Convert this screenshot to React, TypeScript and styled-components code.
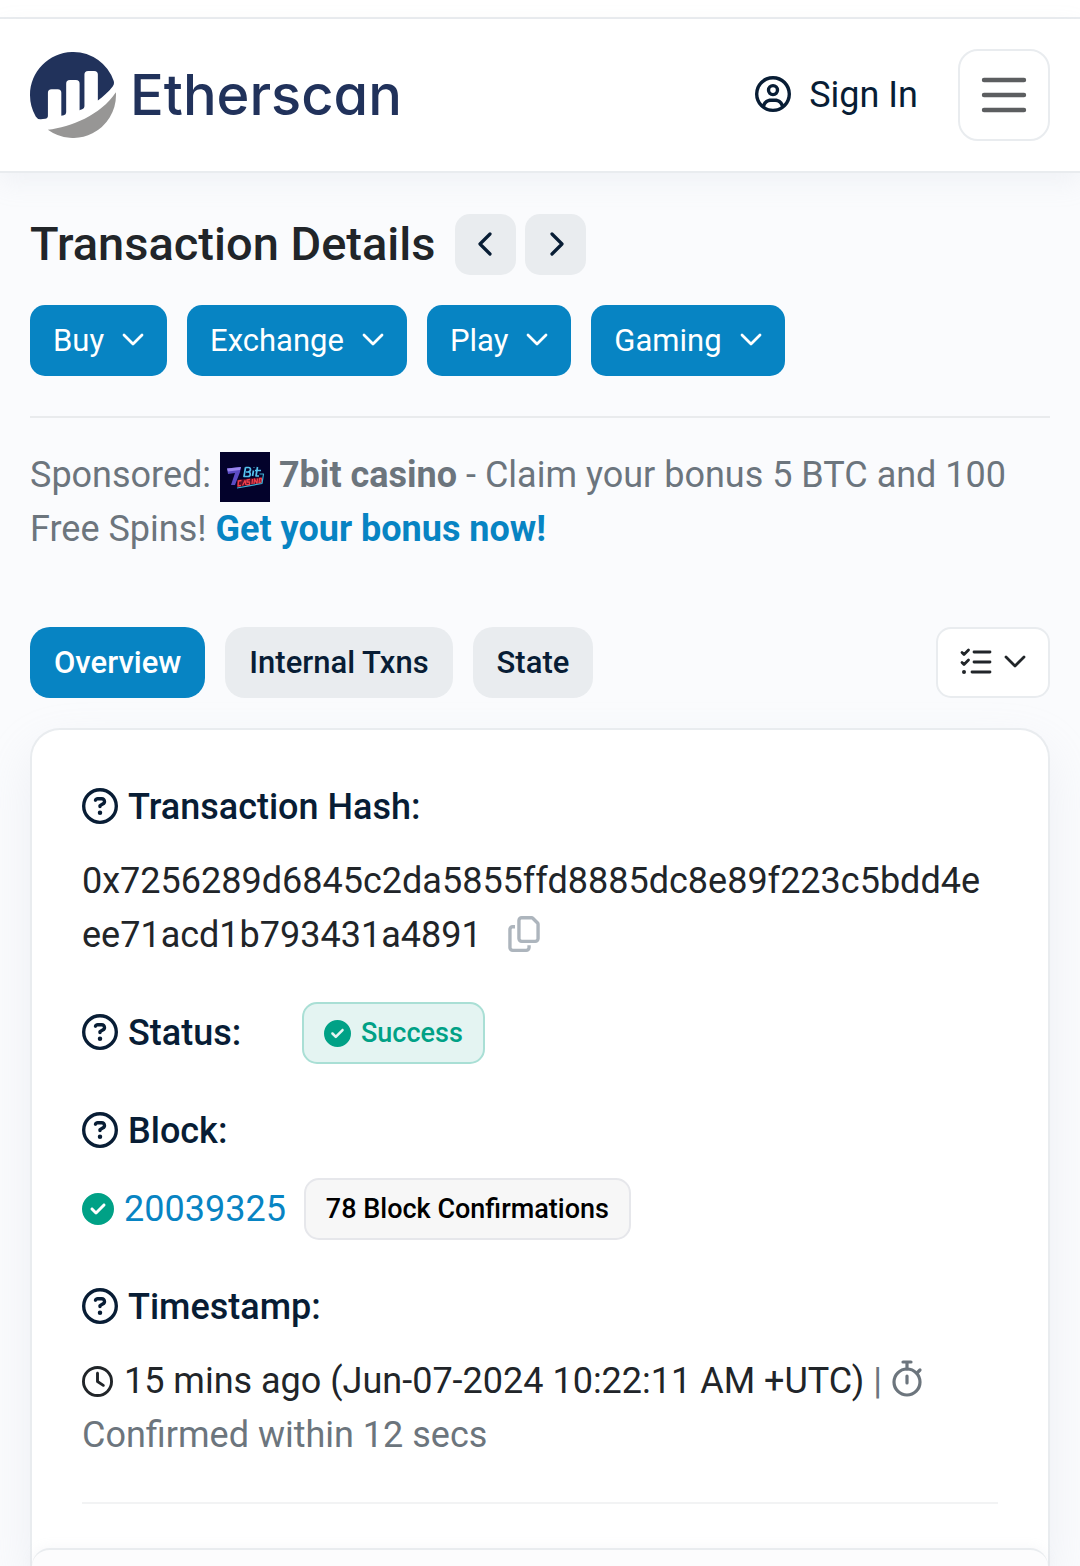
import React from "react";
import styled, { createGlobalStyle } from "styled-components";
import {
  FaCircleCheck,
  FaRegCircleQuestion,
  FaRegCircleUser,
  FaRegClock,
  FaRegCopy,
} from "react-icons/fa6";

const color = {
  navy: "#081d35",
  brand: "#21325b",
  blue: "#0784c3",
  text: "#212529",
  muted: "#6c757d",
  line: "#e9ecef",
  green: "#00a186",
  page: "#fafbfd",
};

const GlobalStyle = createGlobalStyle`
  *, *::before, *::after { box-sizing: border-box; }
  body {
    margin: 0;
    background: ${color.page};
    color: ${color.text};
    font-family: Roboto, "Liberation Sans", sans-serif;
    font-size: 36px;
    line-height: 54px;
  }
  button { font: inherit; color: inherit; margin: 0; cursor: pointer; }
  a { text-decoration: none; color: ${color.blue}; }
  svg { flex: none; }
`;

const Page = styled.div`
  display: flex;
  flex-direction: column;
  min-height: 100vh;
`;

const TopStrip = styled.div`
  height: 19px;
  background: #fff;
  border-bottom: 2px solid ${color.line};
`;

const Header = styled.header`
  display: flex;
  align-items: center;
  justify-content: space-between;
  padding: 30px;
  background: #fff;
  border-bottom: 2px solid ${color.line};
  box-shadow: 0 10px 24px rgba(189, 197, 209, 0.15);
`;

const Brand = styled.a`
  display: flex;
  align-items: center;
  gap: 14px;
  color: ${color.brand};
  font-family: Inter, Roboto, sans-serif;
  font-size: 56px;
  font-weight: 500;
  font-feature-settings: "cv11" 1;
`;

const HeaderActions = styled.div`
  display: flex;
  align-items: center;
  gap: 40px;
`;

const SignIn = styled.a`
  display: flex;
  align-items: center;
  gap: 18px;
  color: ${color.navy};

  svg {
    margin-bottom: 3px;
  }
`;

const MenuButton = styled.button`
  display: flex;
  align-items: center;
  justify-content: center;
  width: 92px;
  height: 92px;
  padding: 0;
  background: #fff;
  border: 2px solid ${color.line};
  border-radius: 20px;
`;

const Main = styled.main`
  display: flex;
  flex-direction: column;
  flex: 1;
  padding: 40px 30px 0;
`;

const TitleRow = styled.div`
  display: flex;
  align-items: center;
  gap: 20px;
  margin-bottom: 30px;
`;

const Title = styled.h1`
  margin: 0;
  font-size: 47px;
  line-height: 62px;
  font-weight: 500;
`;

const Pager = styled.div`
  display: flex;
  gap: 9px;
`;

const PagerButton = styled.button`
  display: flex;
  align-items: center;
  justify-content: center;
  width: 61px;
  height: 61px;
  padding: 0;
  border: 0;
  border-radius: 15px;
  background: ${color.line};
  color: ${color.navy};
`;

const PromoRow = styled.div`
  display: flex;
  flex-wrap: wrap;
  gap: 20px;
`;

const PromoButton = styled.button`
  display: flex;
  align-items: center;
  gap: 18px;
  height: 71px;
  padding: 0 23px;
  border: 0;
  border-radius: 15px;
  background: ${color.blue};
  color: #fff;
  font-size: 31px;
`;

const Rule = styled.hr<{ $gap: number; $soft?: boolean }>`
  width: 100%;
  height: 2px;
  margin: 40px 0 ${(p) => p.$gap}px;
  border: 0;
  background: ${(p) => (p.$soft ? "#f2f3f4" : "#e9ebed")};
`;

const Sponsored = styled.p`
  margin: 0 0 71px;
  color: ${color.muted};

  svg {
    vertical-align: -15px;
  }
  a {
    font-weight: 700;
  }
`;

const Toolbar = styled.div`
  display: flex;
  justify-content: space-between;
  margin-bottom: 30px;
`;

const Tabs = styled.div`
  display: flex;
  gap: 20px;
`;

const Tab = styled.button<{ $active?: boolean }>`
  height: 71px;
  padding: 0 24px;
  border: 0;
  border-radius: 20px;
  background: ${(p) => (p.$active ? color.blue : color.line)};
  color: ${(p) => (p.$active ? "#fff" : color.navy)};
  font-size: 31px;
  font-weight: 500;
`;

const ViewButton = styled.button`
  display: flex;
  align-items: center;
  gap: 12px;
  height: 71px;
  padding: 0 22px;
  border: 2px solid ${color.line};
  border-radius: 15px;
  background: #fff;
`;

const Card = styled.section`
  display: flex;
  flex-direction: column;
  flex: 1;
  background: #fff;
  border: 2px solid ${color.line};
  border-bottom: 0;
  border-radius: 30px 30px 0 0;
  box-shadow: 0 20px 48px rgba(189, 197, 209, 0.2);
`;

const Details = styled.dl`
  display: flex;
  flex-direction: column;
  gap: 40px;
  margin: 0;
  padding: 50px 50px 0;
`;

const Field = styled.div<{ $inline?: boolean }>`
  display: flex;
  flex-direction: ${(p) => (p.$inline ? "row" : "column")};
  align-items: ${(p) => (p.$inline ? "center" : "stretch")};
  gap: ${(p) => (p.$inline ? 0 : 20)}px;
`;

const Label = styled.dt`
  display: flex;
  align-items: center;
  gap: 10px;
  min-width: 220px;
  color: ${color.navy};
  font-weight: 500;

  svg {
    margin-bottom: 3px;
  }
`;

const Value = styled.dd`
  margin: 0;
  overflow-wrap: anywhere;
`;

const BlockValue = styled(Value)`
  display: flex;
  align-items: center;

  a {
    margin: 0 18px 0 10px;
  }
`;

const CopyButton = styled.button`
  display: inline-block;
  margin-left: 24px;
  padding: 0;
  border: 0;
  background: none;
  color: #adb5bd;
  vertical-align: -5px;

  svg {
    display: block;
  }
`;

const Badge = styled.span<{ $tone: "success" | "neutral" }>`
  display: flex;
  align-items: center;
  gap: 10px;
  height: 62px;
  padding: 0 20px;
  border: 2px solid ${(p) => (p.$tone === "success" ? "#a9dfd5" : "#e6e7eb")};
  border-radius: 15px;
  background: ${(p) => (p.$tone === "success" ? "#e4f4f2" : "#f7f7f7")};
  color: ${(p) => (p.$tone === "success" ? color.green : "#000")};
  font-size: 27px;
  line-height: 40px;
  font-weight: 500;
`;

const Muted = styled.span`
  color: ${color.muted};

  svg {
    vertical-align: -4px;
  }
`;

const Time = styled.span`
  svg {
    vertical-align: -4px;
    margin-right: 2px;
  }
`;

const RuleWrap = styled.div`
  padding: 0 50px;
`;

const NextPanel = styled.div`
  flex: 1;
  border-top: 2px solid ${color.line};
  border-radius: 30px 30px 0 0;
  background: #fcfcfd;
  box-shadow: 0 0 12px rgba(189, 197, 209, 0.15);
`;

const CHEVRONS = {
  down: { w: 22, h: 16, d: "M2 2l9 9 9-9", stroke: 2.8 },
  left: { w: 18, h: 26, d: "M13 3L3 13l10 10", stroke: 3.2 },
  right: { w: 18, h: 26, d: "M5 3l10 10L5 23", stroke: 3.2 },
};

const Chevron = ({ dir = "down" }: { dir?: keyof typeof CHEVRONS }) => {
  const { w, h, d, stroke } = CHEVRONS[dir];
  return (
    <svg width={w} height={h} viewBox={`0 0 ${w} ${h}`} fill="none" aria-hidden="true">
      <path
        d={d}
        stroke="currentColor"
        strokeWidth={stroke}
        strokeLinecap="round"
        strokeLinejoin="round"
      />
    </svg>
  );
};

const LogoMark = () => (
  <svg width="86" height="86" viewBox="0 0 293.8 293.8" aria-hidden="true">
    <path
      fill={color.brand}
      d="M61.2 139.4a12.47 12.47 0 0 1 12.5-12.5l20.8.1a12.47 12.47 0 0 1 12.5 12.5V218c2.3-.7 5.3-1.4 8.6-2.2a10.39 10.39 0 0 0 8-10.1v-97.5a12.47 12.47 0 0 1 12.5-12.5h20.8a12.47 12.47 0 0 1 12.5 12.5v90.5s5.2-2.1 10.3-4.2a10.4 10.4 0 0 0 6.3-9.6V77.1a12.47 12.47 0 0 1 12.5-12.5h20.8a12.47 12.47 0 0 1 12.5 12.5v88.6c18-13 36.3-28.7 50.7-47.6a20.9 20.9 0 0 0 3.2-19.5A146.6 146.6 0 0 0 149 0C67.5-1.6 0 65.4 0 146.8a146.5 146.5 0 0 0 19.5 73.5 18.6 18.6 0 0 0 17.8 9.1c3.9-.3 8.8-.8 14.7-1.5a10.4 10.4 0 0 0 9.2-10.3z"
    />
    <path
      fill="#979695"
      d="M60.9 265.9A146.8 146.8 0 0 0 293.8 147.2c0-3.4-.2-6.7-.4-10-53.6 80-152.7 117.4-232.5 128.7"
    />
  </svg>
);

const MenuBars = () => (
  <svg width="46" height="36" viewBox="0 0 46 36" aria-hidden="true">
    <path
      d="M3 3h40M3 18h40M3 33h40"
      stroke="#5c5e60"
      strokeWidth="4.4"
      strokeLinecap="round"
    />
  </svg>
);

const CasinoLogo = () => (
  <svg width="50" height="50" viewBox="0 0 50 50" role="img" aria-label="7Bit Casino">
    <rect width="50" height="50" fill="#03022b" />
    <path d="M7 16.500l14-1.500-1 5-5 13h-4l4-12-7 1z" fill="#5b4cc4" />
    <path d="M7 16.500l14-1.500-1 3-12 1.500z" fill="#9a86ee" />
    <g fill="none" strokeLinejoin="round">
      <path
        d="M25.500 15.500L24 24.500h4c3 0 3-4.500 0-4.500 3.500-.5 3-4.500.5-4.500h-3M26 20h3M33.500 18.500l-1 5.500M34 15.500v.5M37.500 15l-1.500 9h3M35 18.500h6"
        stroke="#55c3ee"
        strokeWidth="1.700"
      />
      <path d="M17 28l25-3-1 6-24 4z" fill="#5a0f2b" />
      <path
        d="M21.500 28.500l-3 .5-.5 5 3-.5M22.500 33.500l2.500-5 1 4.500M30 27.500l-3 .5v2h2.500v2.500l-3 .5M32.500 27l-.5 5M34 32l.5-5 2.500 4.500.5-5M39.500 26.500h2l-.5 4-2 .5z"
        stroke="#f0404a"
        strokeWidth="1.300"
      />
      <path d="M17 36l25-4.500 1.500-9.500h-4" stroke="#3fb2d6" strokeWidth="1.200" />
    </g>
  </svg>
);

const ListCheck = () => (
  <svg width="32" height="30" viewBox="0 0 32 30" fill="none" aria-hidden="true">
    <path
      d="M14 4h16M14 14h16M12 24h18M2 4.500l2 2L8.500 2M2 14.500l2 2 4.500-4.500"
      stroke="#212529"
      strokeWidth="2.8"
      strokeLinecap="round"
      strokeLinejoin="round"
    />
    <circle cx="4" cy="24" r="2" fill="#212529" />
  </svg>
);

const Stopwatch = () => (
  <svg width="32" height="37" viewBox="0 0 32 37" fill="none" aria-hidden="true">
    <g stroke="currentColor" strokeWidth="3.2" strokeLinecap="round">
      <circle cx="16" cy="22" r="13" />
      <path d="M16 16v7M12 2h8M16 3v6M26 13l3-3" />
    </g>
  </svg>
);

const PROMOS = ["Buy", "Exchange", "Play", "Gaming"];
const TABS = ["Overview", "Internal Txns", "State"];

const FieldLabel = ({ children }: { children: React.ReactNode }) => (
  <Label>
    <FaRegCircleQuestion size={36} aria-hidden="true" />
    {children}
  </Label>
);

export default function App() {
  return (
    <>
      <GlobalStyle />
      <Page>
        <TopStrip />
        <Header>
          <Brand href="#">
            <LogoMark />
            Etherscan
          </Brand>
          <HeaderActions>
            <SignIn href="#">
              <FaRegCircleUser size={36} aria-hidden="true" />
              Sign In
            </SignIn>
            <MenuButton aria-label="Menu">
              <MenuBars />
            </MenuButton>
          </HeaderActions>
        </Header>
        <Main>
          <TitleRow>
            <Title>Transaction Details</Title>
            <Pager>
              <PagerButton aria-label="Previous">
                <Chevron dir="left" />
              </PagerButton>
              <PagerButton aria-label="Next">
                <Chevron dir="right" />
              </PagerButton>
            </Pager>
          </TitleRow>
          <PromoRow>
            {PROMOS.map((name) => (
              <PromoButton key={name}>
                {name}
                <Chevron />
              </PromoButton>
            ))}
          </PromoRow>
          <Rule $gap={30} />
          <Sponsored>
            Sponsored: <CasinoLogo /> <b>7bit casino</b> - Claim your bonus 5 BTC and 100 Free
            Spins! <a href="#">Get your bonus now!</a>
          </Sponsored>
          <Toolbar>
            <Tabs>
              {TABS.map((name, i) => (
                <Tab key={name} $active={i === 0}>
                  {name}
                </Tab>
              ))}
            </Tabs>
            <ViewButton aria-label="View options">
              <ListCheck />
              <Chevron />
            </ViewButton>
          </Toolbar>
          <Card>
            <Details>
              <Field>
                <FieldLabel>Transaction Hash:</FieldLabel>
                <Value>
                  0x7256289d6845c2da5855ffd8885dc8e89f223c5bdd4eee71acd1b793431a4891
                  <CopyButton aria-label="Copy hash">
                    <FaRegCopy size={36} />
                  </CopyButton>
                </Value>
              </Field>
              <Field $inline>
                <FieldLabel>Status:</FieldLabel>
                <Value>
                  <Badge $tone="success">
                    <FaCircleCheck size={27} aria-hidden="true" />
                    Success
                  </Badge>
                </Value>
              </Field>
              <Field>
                <FieldLabel>Block:</FieldLabel>
                <BlockValue>
                  <FaCircleCheck size={32} color={color.green} aria-hidden="true" />
                  <a href="#">20039325</a>
                  <Badge $tone="neutral">78 Block Confirmations</Badge>
                </BlockValue>
              </Field>
              <Field>
                <FieldLabel>Timestamp:</FieldLabel>
                <Value>
                  <Time>
                    <FaRegClock size={31} aria-hidden="true" /> 15 mins ago (Jun-07-2024 10:22:11
                    AM +UTC)
                  </Time>{" "}
                  <Muted>
                    | <Stopwatch /> Confirmed within 12 secs
                  </Muted>
                </Value>
              </Field>
            </Details>
            <RuleWrap>
              <Rule $gap={44} $soft />
            </RuleWrap>
            <NextPanel />
          </Card>
        </Main>
      </Page>
    </>
  );
}
